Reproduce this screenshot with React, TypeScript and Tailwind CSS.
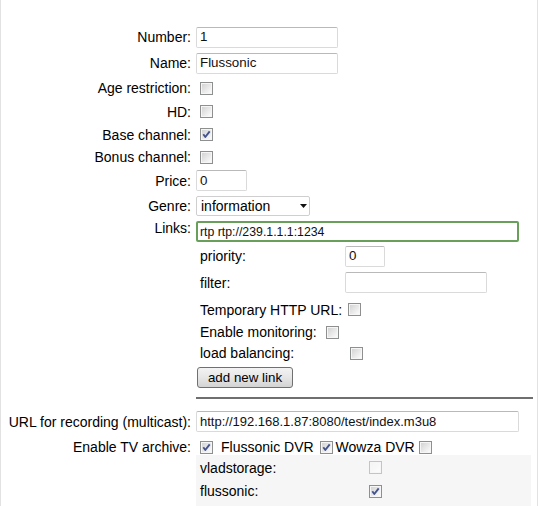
import React from "react";

// Windows-style checkbox box with optional tick
function Check({ checked = false, disabled = false }: { checked?: boolean; disabled?: boolean }) {
  const id = React.useId();
  return (
    <svg width="13" height="13" viewBox="0 0 13 13" className="block shrink-0">
      <defs>
        <linearGradient id={id} x1="0" y1="0" x2="1" y2="1">
          <stop offset="0" stopColor={disabled ? "#f4f4f4" : "#d4d4d4"} />
          <stop offset="1" stopColor="#fbfbfb" />
        </linearGradient>
      </defs>
      <rect x="0.5" y="0.5" width="12" height="12" fill="#f6f6f6" stroke={disabled ? "#c4c4c4" : "#8e8f8f"} />
      <rect x="2" y="2" width="9" height="9" fill={`url(#${id})`} />
      {checked && (
        <path d="M3.3 6.3 L5.3 9 L9.7 3.3" stroke="#44538d" strokeWidth="1.9" fill="none" strokeLinejoin="round" />
      )}
    </svg>
  );
}

function TextBox({
  value = "",
  w,
  green = false,
  size = "text-[13.33px]",
}: {
  value?: string;
  w: string;
  green?: boolean;
  size?: string;
}) {
  const base = green
    ? "border-2 border-[#68a05b] pl-[2px]"
    : "border border-[#dadada] border-t-[#b9b9b9] pl-[3px]";
  return (
    <div className={`flex h-[21px] items-center whitespace-nowrap rounded-[2px] bg-white text-[#111] ${size} ${base} ${w}`}>
      {value}
    </div>
  );
}

function Row({ label, h, children }: { label: string; h: string; children?: React.ReactNode }) {
  return (
    <div className={`flex items-center ${h}`}>
      <div className="w-[190px] whitespace-nowrap text-right">{label}</div>
      <div className="ml-[5px] flex items-center">{children}</div>
    </div>
  );
}

export default function App() {
  return (
    <div className="h-[506px] w-[538px] overflow-hidden border-x border-[#e2e2e2] bg-white pt-[24px] font-['Liberation_Sans',Arial,sans-serif] text-[14px] leading-[16px] text-black">
      <Row label="Number:" h="h-[26px]">
        <TextBox value="1" w="w-[142px]" />
      </Row>
      <Row label="Name:" h="h-[26px]">
        <TextBox value="Flussonic" w="w-[142px]" />
      </Row>
      <Row label="Age restriction:" h="h-[24px]">
        <span className="ml-[4px]"><Check /></span>
      </Row>
      <Row label="HD:" h="h-[23px]">
        <span className="ml-[4px]"><Check /></span>
      </Row>
      <Row label="Base channel:" h="h-[23px]">
        <span className="ml-[4px]"><Check checked /></span>
      </Row>
      <Row label="Bonus channel:" h="h-[22px]">
        <span className="ml-[4px]"><Check /></span>
      </Row>
      <Row label="Price:" h="h-[25px]">
        <TextBox value="0" w="w-[51px]" />
      </Row>
      <Row label="Genre:" h="h-[26px]">
        <div className="flex h-[20px] w-[114px] items-center justify-between rounded-[2px] border border-[#cfcfcf] bg-white pl-[4px] pr-[2px]">
          <span>information</span>
          <svg width="7" height="4" viewBox="0 0 7 4" className="block">
            <polygon points="0,0 7,0 3.5,4" fill="#111" />
          </svg>
        </div>
      </Row>

      {/* links block */}
      <div className="flex">
        <div className="w-[190px] pt-[1px] text-right">Links:</div>
        <div className="ml-[5px] flex flex-col pt-[2px]">
          <TextBox value="rtp rtp://239.1.1.1:1234" w="w-[323px]" green size="text-[12.3px]" />
          <div className="flex flex-col pl-[4px]">
            <div className="flex h-[28px] items-center">
              <span className="w-[145px]">priority:</span>
              <TextBox value="0" w="w-[40px]" />
            </div>
            <div className="flex h-[25px] items-center">
              <span className="w-[145px]">filter:</span>
              <TextBox w="w-[142px]" />
            </div>
            <div className="flex h-[29px] items-center">
              <span className="whitespace-nowrap">Temporary HTTP URL:</span>
              <span className="ml-[6px]"><Check /></span>
            </div>
            <div className="flex h-[16px] items-center">
              <span className="whitespace-nowrap">Enable monitoring:</span>
              <span className="ml-[9px]"><Check /></span>
            </div>
            <div className="flex h-[26px] items-center">
              <span className="w-[150px]">load balancing:</span>
              <Check />
            </div>
            <div className="flex h-[23px] items-center">
              <button className="-ml-[3px] h-[21px] w-[96px] rounded-[3px] border border-[#707070] bg-gradient-to-b from-[#f3f3f3] via-[#e6e6e6] to-[#d3d3d3] text-[13.33px] leading-[15px] text-black">
                add new link
              </button>
            </div>
          </div>
        </div>
      </div>

      <div className="ml-[195px] mt-[8px] w-[337px] border-t-2 border-[#6f6f6f]" />

      <div className="mt-[10px]">
        <Row label="URL for recording (multicast):" h="h-[25px]">
          <TextBox value="http://192.168.1.87:8080/test/index.m3u8" w="w-[323px]" size="text-[13px]" />
        </Row>
      </div>

      <div className="mt-[5px] flex h-[16px] items-center">
        <div className="w-[190px] whitespace-nowrap text-right">Enable TV archive:</div>
        <div className="ml-[9px] flex items-center whitespace-nowrap">
          <Check checked />
          <span className="ml-[8px]">Flussonic DVR</span>
          <span className="ml-[6px]"><Check checked /></span>
          <span className="ml-[3px]">Wowza DVR</span>
          <span className="ml-[4px]"><Check /></span>
        </div>
      </div>

      {/* storage list */}
      <div className="ml-[195px] w-[335px] bg-[#f6f6f6] pb-[20px] pl-[4px]">
        <div className="flex h-[25px] items-center">
          <span className="w-[169px]">vladstorage:</span>
          <Check disabled />
        </div>
        <div className="flex h-[22px] items-center">
          <span className="w-[169px]">flussonic:</span>
          <Check checked />
        </div>
      </div>
    </div>
  );
}
